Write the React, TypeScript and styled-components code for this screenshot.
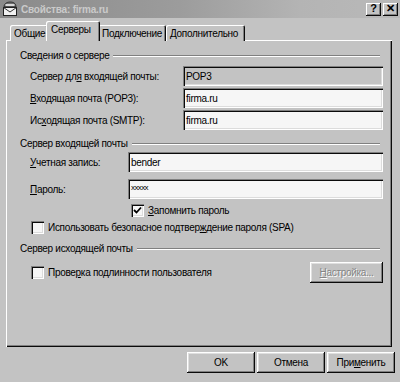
import React from "react";
import styled, { createGlobalStyle } from "styled-components";

const Global = createGlobalStyle`
  html, body { margin: 0; padding: 0; background: #c3c3c3; }
  body { font-family: "Liberation Sans", Arial, sans-serif; font-size: 10px; letter-spacing: -0.3px; color: #000; }
  #root { width: 400px; height: 382px; }
  * { box-sizing: border-box; }
`;

const Window = styled.div`
  width: 400px;
  height: 382px;
  background: #c3c3c3;
  display: flex;
  flex-direction: column;
  overflow: hidden;
`;

const TitleBar = styled.div`
  height: 18px;
  display: flex;
  align-items: center;
  padding: 0 2px 0 2px;
  background: linear-gradient(to right, #8a8a8a 0%, #9c9c9c 45%, #b4b4b4 75%, #b9b9b9 100%);
`;

const TitleText = styled.div`
  flex: 1;
  margin-left: 3px;
  color: #cacaca;
  font-weight: bold;
  font-size: 10px;
  letter-spacing: -0.2px;
`;

const TitleButton = styled.div<{ $gap?: number }>`
  width: 15px;
  height: 13px;
  margin-left: ${(p) => p.$gap ?? 0}px;
  background: #c3c3c3;
  box-shadow: inset -1px -1px #0a0a0a, inset 1px 1px #ffffff, inset -2px -2px #808080;
  display: flex;
  align-items: center;
  justify-content: center;
  font-weight: bold;
  font-size: 11px;
  letter-spacing: 0;
  line-height: 1;
  padding-bottom: 1px;
`;

const TabStrip = styled.div`
  display: flex;
  align-items: flex-end;
  height: 19px;
  margin-top: 4px;
  margin-left: 10px;
  margin-bottom: -1px;
  position: relative;
  z-index: 1;
`;

const Tab = styled.div<{ $active?: boolean; $w: number }>`
  width: ${(p) => p.$w}px;
  height: ${(p) => (p.$active ? 20 : 16)}px;
  margin: 0 ${(p) => (p.$active ? -2 : 0)}px;
  padding-left: ${(p) => (p.$active ? 5 : 4)}px;
  background: #c3c3c3;
  display: flex;
  align-items: ${(p) => (p.$active ? "flex-start" : "center")};
  padding-top: ${(p) => (p.$active ? 3 : 1)}px;
  border-radius: 2px 2px 0 0;
  box-shadow: inset 1px 1px #ffffff, inset -1px 0 #0a0a0a, inset -2px 0 #808080;
  position: relative;
  z-index: ${(p) => (p.$active ? 2 : 1)};
  white-space: nowrap;
`;

const Panel = styled.div`
  height: 307px;
  margin: 0 8px 0 6px;
  padding: 9px 9px 0 14px;
  background: #c3c3c3;
  box-shadow: inset 1px 1px #ffffff, inset -1px -1px #0a0a0a, inset -2px -2px #808080;
  display: flex;
  flex-direction: column;
`;

const SectionHeader = styled.div<{ $top?: number }>`
  display: flex;
  align-items: center;
  height: 13px;
  margin-top: ${(p) => p.$top ?? 0}px;
  white-space: nowrap;
`;

const EtchedLine = styled.div`
  flex: 1;
  height: 2px;
  margin-left: 4px;
  margin-right: 3px;
  border-top: 1px solid #808080;
  border-bottom: 1px solid #ffffff;
`;

const FieldRow = styled.div<{ $label: number; $top: number }>`
  display: grid;
  grid-template-columns: ${(p) => p.$label}px 1fr;
  align-items: center;
  height: 20px;
  margin-top: ${(p) => p.$top}px;
  margin-left: 10px;
  white-space: nowrap;
`;

const TextField = styled.div<{ $disabled?: boolean }>`
  height: 20px;
  padding: 0 3px;
  display: flex;
  align-items: center;
  background: ${(p) => (p.$disabled ? "#c3c3c3" : "#f6f6f6")};
  box-shadow: inset 1px 1px #808080, inset 2px 2px #0a0a0a, inset -1px -1px #ffffff,
    inset -2px -2px #dcdcdc;
`;

const Masked = styled.span`
  font-size: 8px;
  letter-spacing: -0.6px;
  margin-top: -4px;
`;

const CheckRow = styled.div<{ $left: number; $top: number }>`
  display: flex;
  align-items: center;
  height: 13px;
  margin-left: ${(p) => p.$left}px;
  margin-top: ${(p) => p.$top}px;
  white-space: nowrap;
`;

const CheckBox = styled.div`
  width: 13px;
  height: 13px;
  flex: none;
  margin-right: 4px;
  background: #f6f6f6;
  box-shadow: inset 1px 1px #808080, inset 2px 2px #0a0a0a, inset -1px -1px #ffffff,
    inset -2px -2px #dcdcdc;
  display: flex;
  align-items: center;
  justify-content: center;
`;

const ActionRow = styled.div`
  display: flex;
  align-items: center;
  height: 20px;
  margin-top: 7px;
  margin-left: 11px;
`;

const Spacer = styled.div`
  flex: 1;
`;

const Button = styled.div<{ $w: number; $disabled?: boolean }>`
  width: ${(p) => p.$w}px;
  height: 21px;
  display: flex;
  align-items: center;
  justify-content: center;
  background: #c3c3c3;
  color: ${(p) => (p.$disabled ? "#858585" : "#000")};
  text-shadow: ${(p) => (p.$disabled ? "1px 1px #ffffff" : "none")};
  box-shadow: inset -1px -1px #0a0a0a, inset 1px 1px #ffffff, inset -2px -2px #808080,
    inset 2px 2px #dfdfdf;
  white-space: nowrap;
`;

const ButtonBar = styled.div`
  display: flex;
  justify-content: flex-end;
  gap: 2px;
  margin-top: 5px;
  padding-right: 5px;
`;

const U = styled.span`
  text-decoration: underline;
  text-underline-offset: 1px;
`;

const AppIcon = () => (
  <svg width="16" height="16" viewBox="0 0 16 16">
    <path d="M2 6 C2 2 6 1 8 1 C11 1 14 2 14 6 Z" fill="#6e6e6e" stroke="#202020" strokeWidth="0.8" />
    <rect x="3.5" y="3" width="9" height="2" fill="#d8d8d8" />
    <rect x="1.5" y="6.5" width="13" height="8" fill="#f0f0f0" stroke="#202020" strokeWidth="1" />
    <path d="M1.5 6.5 L8 11 L14.5 6.5" fill="none" stroke="#303030" strokeWidth="1" />
  </svg>
);

const Check = () => (
  <svg width="9" height="9" viewBox="0 0 9 9">
    <path d="M1 4 L3.5 6.5 L8 1.5" fill="none" stroke="#000" strokeWidth="1.8" />
  </svg>
);

export default function App() {
  return (
    <>
      <Global />
      <Window>
        <TitleBar>
          <AppIcon />
          <TitleText>Свойства: firma.ru</TitleText>
          <TitleButton>?</TitleButton>
          <TitleButton $gap={2}>✕</TitleButton>
        </TitleBar>

        <TabStrip>
          <Tab $w={38}>Общие</Tab>
          <Tab $w={54} $active>
            Серверы
          </Tab>
          <Tab $w={68}>Подключение</Tab>
          <Tab $w={79}>Дополнительно</Tab>
        </TabStrip>

        <Panel>
          <SectionHeader>
            Сведения о сервере
            <EtchedLine />
          </SectionHeader>
          <FieldRow $label={153} $top={4}>
            <span>
              Сервер дл<U>я</U> входящей почты:
            </span>
            <TextField $disabled>POP3</TextField>
          </FieldRow>
          <FieldRow $label={153} $top={2}>
            <span>
              <U>В</U>ходящая почта (POP3):
            </span>
            <TextField>firma.ru</TextField>
          </FieldRow>
          <FieldRow $label={153} $top={2}>
            <span>
              Ис<U>х</U>одящая почта (SMTP):
            </span>
            <TextField>firma.ru</TextField>
          </FieldRow>

          <SectionHeader $top={7}>
            Сервер входящей почты
            <EtchedLine />
          </SectionHeader>
          <FieldRow $label={98} $top={2}>
            <span>
              <U>У</U>четная запись:
            </span>
            <TextField>bender</TextField>
          </FieldRow>
          <FieldRow $label={98} $top={7}>
            <span>
              <U>П</U>ароль:
            </span>
            <TextField>
              <Masked>xxxxx</Masked>
            </TextField>
          </FieldRow>
          <CheckRow $left={111} $top={5}>
            <CheckBox>
              <Check />
            </CheckBox>
            <span>
              <U>З</U>апомнить пароль
            </span>
          </CheckRow>
          <CheckRow $left={11} $top={4}>
            <CheckBox />
            <span>
              Использовать безопасное подтвер<U>ж</U>дение пароля (SPA)
            </span>
          </CheckRow>

          <SectionHeader $top={8}>
            Сервер исходящей почты
            <EtchedLine />
          </SectionHeader>
          <ActionRow>
            <CheckBox />
            <span>
              Прове<U>р</U>ка подлинности пользователя
            </span>
            <Spacer />
            <Button $w={73} $disabled>
              <span>
                <U>Н</U>астройка...
              </span>
            </Button>
          </ActionRow>
        </Panel>

        <ButtonBar>
          <Button $w={68}>OK</Button>
          <Button $w={68}>Отмена</Button>
          <Button $w={68}>
            <span>
              При<U>м</U>енить
            </span>
          </Button>
        </ButtonBar>
      </Window>
    </>
  );
}
